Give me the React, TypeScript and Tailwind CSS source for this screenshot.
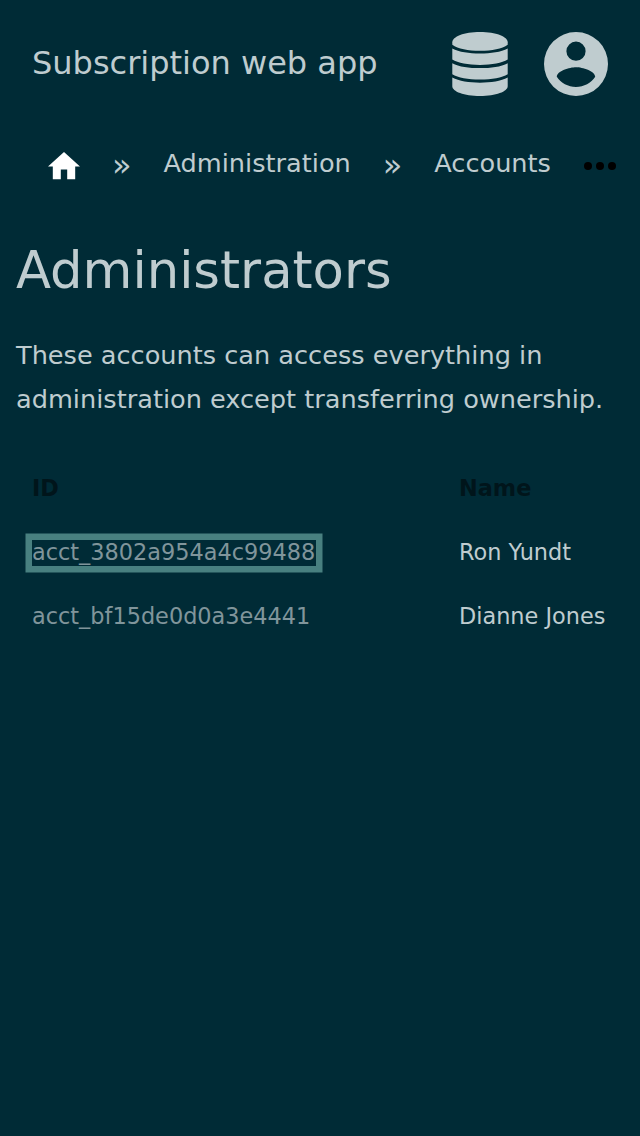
const rows = [
  { id: "acct_3802a954a4c99488", name: "Ron Yundt", focused: true },
  { id: "acct_bf15de0d0a3e4441", name: "Dianne Jones", focused: false },
];

function DatabaseIcon() {
  return (
    <svg viewBox="0 0 64 64" className="mr-8 size-16" fill="currentColor">
      <path d="M4.3 10.3C4.3 4.6 16 0 32 0S59.7 4.6 59.7 10.3V12.8C54 16.8 44 18.8 32 18.8S10 16.8 4.3 12.8Z" />
      <path d="M4.3 16.4C11 20 21 21.4 32 21.4S53 20 59.7 16.4V27.6C54 31 44 33 32 33S10 31 4.3 27.6Z" />
      <path d="M4.3 31.2C11 34.8 21 36.1 32 36.1S53 34.8 59.7 31.2V42.3C54 45.7 44 47.6 32 47.6S10 45.7 4.3 42.3Z" />
      <path d="M4.3 45.6C11 49.3 21 50.7 32 50.7S53 49.3 59.7 45.6V54.3C59.7 59.6 48 64 32 64S4.3 59.6 4.3 54.3Z" />
    </svg>
  );
}

function AccountIcon() {
  return (
    <svg viewBox="0 0 64 64" className="size-16" fill="currentColor">
      <path
        fillRule="evenodd"
        d="M32 0a32 32 0 1 1 0 64a32 32 0 0 1 0-64ZM32 9.6a9.6 9.6 0 1 0 0 19.2a9.6 9.6 0 0 0 0-19.2ZM32 35.2C25.6 35.2 12.9 38.7 12.8 44.8C16.9 51 24 55 32 55S47.1 51 51.2 44.8C51.1 38.7 38.4 35.2 32 35.2Z"
      />
    </svg>
  );
}

function HomeIcon() {
  return (
    <svg viewBox="2 3 20 17" className="mt-1.5 h-[27.2px] w-8 text-white" fill="currentColor">
      <path d="M10 20v-6h4v6h5v-8h3L12 3 2 12h3v8z" />
    </svg>
  );
}

function MoreIcon() {
  return (
    <svg viewBox="0 0 32 8" className="mt-1.5 ml-[33px] h-2 w-8 text-black" fill="currentColor">
      <circle cx="4" cy="4" r="4" />
      <circle cx="16" cy="4" r="4" />
      <circle cx="28" cy="4" r="4" />
    </svg>
  );
}

function Separator() {
  return <span className="mt-1 ml-8 w-[51.5px] text-[32px] leading-[44px]">»</span>;
}

export default function App() {
  return (
    <div className="min-h-[1136px] w-[640px] overflow-hidden bg-[#002b36] font-['DejaVu_Sans',sans-serif] text-[#bfcccf]">
      <header className="flex h-32 items-center px-8">
        <div className="grow pb-0.5 text-[32px] leading-[48px]">Subscription web app</div>
        <DatabaseIcon />
        <AccountIcon />
      </header>
      <nav className="flex h-[70px] items-center pl-12 text-[25.6px] whitespace-nowrap">
        <HomeIcon />
        <Separator />
        <span>Administration</span>
        <Separator />
        <span>Accounts</span>
        <MoreIcon />
      </nav>
      <main className="px-4">
        <h1 className="mt-[37px] text-[51.2px] leading-[70px]">Administrators</h1>
        <p className="mt-7 text-[25.6px] leading-[44px]">
          These accounts can access everything in administration except transferring ownership.
        </p>
        <table className="mt-9 w-full text-left text-[22.4px]">
          <thead>
            <tr className="h-16 text-[#00151b]">
              <th className="w-[427px] pl-4">ID</th>
              <th className="pl-4">Name</th>
            </tr>
          </thead>
          <tbody>
            {rows.map((row) => (
              <tr key={row.id} className="h-16">
                <td className="pl-4 text-[#80959b]">
                  {row.focused ? (
                    <a className="block h-[26px] w-[284px] leading-[24px] shadow-[0_0_0_6.5px_#488080]">
                      {row.id}
                    </a>
                  ) : (
                    <a>{row.id}</a>
                  )}
                </td>
                <td className="pl-4">{row.name}</td>
              </tr>
            ))}
          </tbody>
        </table>
      </main>
    </div>
  );
}
